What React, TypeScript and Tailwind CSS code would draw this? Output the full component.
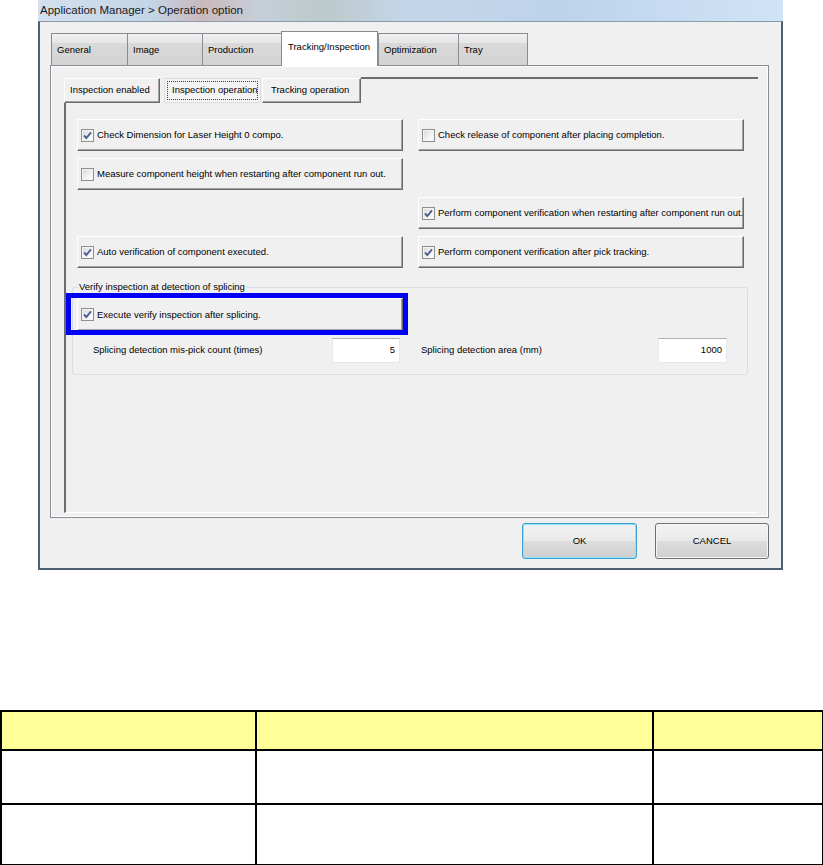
import React from "react";

const font = "font-['Liberation_Sans',Arial,sans-serif]";

const mainTabs = [
  { label: "General", w: "w-[76px]" },
  { label: "Image", w: "w-[75px]" },
  { label: "Production", w: "w-[79px]" },
  { label: "Tracking/Inspection", w: "w-[97px]", active: true },
  { label: "Optimization", w: "w-[80px]" },
  { label: "Tray", w: "w-[70px]", last: true },
];

function CheckBox({ checked }: { checked: boolean }) {
  return (
    <span className="w-[13px] h-[13px] shrink-0 border border-[#8e8f8f] bg-[linear-gradient(135deg,#d6d6d6,#f4f4f4_60%,#ffffff)] shadow-[inset_0_0_0_1px_#f4f4f4] flex items-center justify-center">
      {checked && (
        <svg width="11" height="11" viewBox="0 0 11 11">
          <path d="M2 5.5 L4.3 8 L9 2.3" fill="none" stroke="#4a5f97" strokeWidth="1.9" />
        </svg>
      )}
    </span>
  );
}

function OptionButton({ label, checked, h = "h-[32px]" }: { label: string; checked: boolean; h?: string }) {
  return (
    <div
      className={`${h} flex items-center gap-[3px] pl-[3px] bg-[#f0f0f0] border border-white border-r-[#696969] border-b-[#696969] shadow-[inset_-1px_-1px_0_#a0a0a0]`}
    >
      <CheckBox checked={checked} />
      <span className="text-[9.5px] leading-[12px] whitespace-nowrap">{label}</span>
    </div>
  );
}

function TextBox({ value, w }: { value: string; w: string }) {
  return (
    <div
      className={`${w} h-[25px] bg-white border border-[#e3e9ef] border-t-[#abadb3] flex items-center justify-end pr-[4px] text-[9.5px]`}
    >
      {value}
    </div>
  );
}

function DialogButton({ label, primary }: { label: string; primary?: boolean }) {
  return (
    <div
      className={`h-[36px] rounded-[3px] flex items-center justify-center text-[9.5px] bg-[linear-gradient(#f2f2f2_0%,#ebebeb_48%,#dddddd_52%,#cfcfcf_100%)] ${
        primary
          ? "w-[115px] border border-[#3c9fd6] shadow-[inset_0_0_0_1px_#8fe3fb]"
          : "w-[114px] border border-[#707070] shadow-[inset_0_0_0_1px_#f6f6f6]"
      }`}
    >
      {label}
    </div>
  );
}

export default function App() {
  return (
    <div className={`w-[823px] h-[865px] bg-white text-black ${font}`}>
      {/* dialog screenshot */}
      <div className="ml-[38px] w-[745px] h-[570px] flex flex-col">
        <div className="h-[21px] shrink-0 flex items-center pl-[2px] text-[11.5px] text-[#1a1a1a] bg-[linear-gradient(90deg,#d3e0ee_0%,#c4d5e7_15%,#c9b9bc_22%,#c6cfd9_30%,#bcc9c9_38%,#c4d6ea_50%,#bdd3ea_70%,#d0e4f8_100%)]">
          Application Manager &gt; Operation option
        </div>

        <div className="flex-1 flex flex-col bg-[#f0f0f0] border-x-2 border-b-2 border-[#4f5f73] border-t border-t-[#8a99ab] pl-[10px] pt-[9px]">
          {/* main tabs */}
          <div className="h-[34px] flex items-end pl-[1px]">
            {mainTabs.map((t) =>
              t.active ? (
                <div
                  key={t.label}
                  className={`${t.w} relative z-10 -mb-px h-[35px] bg-white border border-b-0 border-[#898c95] flex items-center pl-[6px] pb-[3px] text-[9.5px] whitespace-nowrap`}
                >
                  {t.label}
                </div>
              ) : (
                <div
                  key={t.label}
                  className={`${t.w} h-[32px] border-t border-l border-[#898c95] ${t.last ? "border-r" : ""} bg-[linear-gradient(#f0f0f0_0%,#e6e6e6_28%,#d9d9d9_30%,#d3d3d3_100%)] flex items-center pl-[5px] pt-[2px] text-[9.5px] whitespace-nowrap`}
                >
                  {t.label}
                </div>
              )
            )}
          </div>

          {/* tab page */}
          <div className="w-[719px] h-[453px] border border-[#898c95] shadow-[inset_1px_1px_0_#ffffff,inset_-1px_-1px_0_#ffffff] pl-[13px] pt-[11px]">
            <div className="w-[694px] h-[436px] flex flex-col">
              {/* inner tabs */}
              <div className="h-[26px] flex text-[9.5px] whitespace-nowrap">
                <div className="mt-[1px] w-[96px] h-[25px] flex items-center pl-[5px] bg-[#f0f0f0] border border-white border-r-[#696969] border-b-[#696969] shadow-[inset_-1px_-1px_0_#a0a0a0]">
                  Inspection enabled
                </div>
                <div className="mt-[1px] ml-[4px] w-[97px] h-[25px] p-[2px] bg-[#f3f3f3] border border-[#dcdcdc]">
                  <div className="h-full border border-dotted border-[#404040] flex items-center pl-[4px]">
                    Inspection operation
                  </div>
                </div>
                <div className="mt-[1px] ml-[1px] w-[99px] h-[25px] flex items-center pl-[8px] bg-[#f0f0f0] border border-white border-r-[#696969] border-b-[#696969] shadow-[inset_-1px_-1px_0_#a0a0a0]">
                  Tracking operation
                </div>
                <div className="flex-1 border-t-2 border-[#6d6d6d]" />
              </div>

              {/* inner page */}
              <div className="flex-1 border-l-2 border-l-[#6d6d6d] border-b border-b-white pt-[16px]">
                <div className="ml-[11px] grid grid-cols-[326px_326px] auto-rows-[32px] gap-x-[15px] gap-y-[7px]">
                  <OptionButton checked label="Check Dimension for Laser Height 0 compo." />
                  <OptionButton checked={false} label="Check release of component after placing completion." />
                  <OptionButton checked={false} label="Measure component height when restarting after component run out." />
                  <div />
                  <div />
                  <OptionButton checked label="Perform component verification when restarting after component run out." />
                  <OptionButton checked label="Auto verification of component executed." />
                  <OptionButton checked label="Perform component verification after pick tracking." />
                </div>

                <fieldset className="mt-[13px] ml-[6px] w-[676px] h-[94px] border border-[#d5dfe5] rounded-[3px] pl-[4px] pt-[5px]">
                  <legend className="ml-[1px] px-[1px] text-[9.5px] leading-[12px]">
                    Verify inspection at detection of splicing
                  </legend>
                  <div className="relative w-[326px]">
                    <OptionButton checked h="h-[33px]" label="Execute verify inspection after splicing." />
                    <span className="absolute -left-[11px] -top-[5px] -right-[5px] -bottom-[4px] border-[5px] border-[#0000f5] pointer-events-none" />
                  </div>
                  <div className="mt-[7px] flex items-center text-[9.5px]">
                    <span className="pl-[16px] w-[255px]">Splicing detection mis-pick count (times)</span>
                    <TextBox value="5" w="w-[68px]" />
                    <span className="pl-[21px] w-[258px]">Splicing detection area (mm)</span>
                    <TextBox value="1000" w="w-[69px]" />
                  </div>
                </fieldset>
              </div>
            </div>
          </div>

          {/* dialog buttons */}
          <div className="mt-[5px] flex justify-end gap-[18px] pr-[12px]">
            <DialogButton primary label="OK" />
            <DialogButton label="CANCEL" />
          </div>
        </div>
      </div>

      {/* table below the screenshot */}
      <table className="mt-[140px] w-[822px] table-fixed border-collapse">
        <colgroup>
          <col className="w-[255px]" />
          <col className="w-[397px]" />
          <col className="w-[170px]" />
        </colgroup>
        <tbody>
          <tr className="h-[39px] bg-[#ffff99]">
            <td className="border-2 border-black" />
            <td className="border-2 border-black" />
            <td className="border-2 border-black" />
          </tr>
          <tr className="h-[54px]">
            <td className="border-2 border-black" />
            <td className="border-2 border-black" />
            <td className="border-2 border-black" />
          </tr>
          <tr className="h-[61px]">
            <td className="border-2 border-black" />
            <td className="border-2 border-black" />
            <td className="border-2 border-black" />
          </tr>
        </tbody>
      </table>
    </div>
  );
}
